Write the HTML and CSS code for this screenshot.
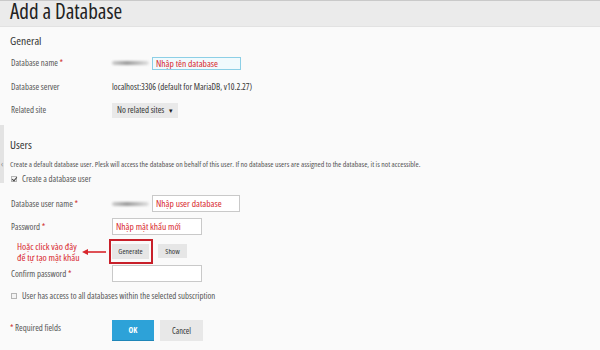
FILE: index.html
```html
<!DOCTYPE html>
<html lang="vi">
  <head>
    <meta charset="UTF-8" />
    <meta name="viewport" content="width=device-width, initial-scale=1.0" />
    <title>Add a Database</title>
    <link rel="stylesheet" href="styles.css">
  </head>
  <body>
    <div class="page-header">
      <h1>Add a Database</h1>
    </div>
    <div class="side-tab">‹</div>
    <div class="content">
      <h2 class="section-title">General</h2>
      <div class="form-row">
        <label>Database name <span class="req">*</span></label>
        <div class="field">
          <span class="blurred"></span>
          <input type="text" class="text-input note-input highlighted" value="Nhập tên database" />
        </div>
      </div>
      <div class="form-row">
        <label>Database server</label>
        <div class="field value">localhost:3306 (default for MariaDB, v10.2.27)</div>
      </div>
      <div class="form-row">
        <label>Related site</label>
        <div class="field">
          <span class="select">No related sites <span class="caret">▾</span></span>
        </div>
      </div>

      <h2 class="section-title users-title">Users</h2>
      <p class="hint">Create a default database user. Plesk will access the database on behalf of this user. If no database users are assigned to the database, it is not accessible.</p>
      <div class="check-row">
        <span class="checkbox checked"></span>
        Create a database user
      </div>
      <div class="user-fields">
        <div class="form-row">
          <label>Database user name <span class="req">*</span></label>
          <div class="field">
            <span class="blurred"></span>
            <input type="text" class="text-input note-input" value="Nhập user database" />
          </div>
        </div>
        <div class="form-row">
          <label>Password <span class="req">*</span></label>
          <div class="field">
            <input type="text" class="text-input note-input pass-input" value="Nhập mật khẩu mới" />
          </div>
        </div>
        <div class="form-row">
          <div class="annotation">
            <span class="annotation-text">Hoặc click vào đây<br />để tự tạo mật khẩu</span>
            <svg class="arrow" width="24" height="8" viewBox="0 0 24 8">
              <line x1="4" y1="4" x2="24" y2="4" stroke="#d8262c" stroke-width="1.6" />
              <polygon points="0,4 6,1 6,7" fill="#d8262c" />
            </svg>
          </div>
          <div class="field">
            <span class="mark-box"><button class="btn btn-generate">Generate</button></span>
            <button class="btn btn-show">Show</button>
          </div>
        </div>
        <div class="form-row">
          <label>Confirm password <span class="req">*</span></label>
          <div class="field">
            <input type="text" class="text-input pass-input" value="" />
          </div>
        </div>
      </div>
      <div class="check-row access-row">
        <span class="checkbox"></span>
        User has access to all databases within the selected subscription
      </div>

      <div class="form-footer">
        <div class="required-note"><span class="req">*</span> Required fields</div>
        <div class="actions">
          <button class="btn-ok">OK</button>
          <button class="btn-cancel">Cancel</button>
        </div>
      </div>
    </div>
  </body>
</html>
```

FILE: styles.css
```css
body {
  margin: 0;
  background: #fafafa;
  font-family: "Open Sans", sans-serif;
  font-stretch: 78%;
  font-size: 8.8px;
  color: #555;
}

input,
button {
  font-family: inherit;
  font-stretch: inherit;
}

.page-header {
  box-sizing: border-box;
  height: 27px;
  padding-left: 10px;
  background: #ebebeb;
  border-top: 1px solid #c9c9c9;
  border-bottom: 1px solid #e2e2e2;
}

.page-header h1 {
  margin: 0;
  font-size: 21px;
  font-weight: normal;
  line-height: 20px;
  color: #222;
  white-space: nowrap;
}

.side-tab {
  position: absolute;
  left: 0;
  top: 125px;
  width: 4px;
  height: 58px;
  background: #e3e3e3;
  color: #888;
  font-size: 8px;
  line-height: 78px;
  text-indent: 1px;
}

.content {
  padding: 0 10px;
}

.section-title {
  margin: 6px 0 2.5px;
  font-size: 11.5px;
  font-stretch: 75%;
  font-weight: normal;
  line-height: 16px;
  color: #333;
}

.users-title {
  margin-top: 14.5px;
  margin-bottom: 0;
}

.form-row {
  display: grid;
  grid-template-columns: 102px 1fr;
  align-items: center;
  height: 23.5px;
  white-space: nowrap;
}

.user-fields {
  margin-top: 7.5px;
}

.user-fields .form-row {
  height: 23.3px;
}

.form-row label {
  padding-left: 1px;
}

.req {
  color: #d0302f;
}

.field {
  display: flex;
  align-items: center;
}

.value {
  color: #333;
}

.blurred {
  width: 37px;
  height: 4px;
  margin-right: 3px;
  border-radius: 2px;
  background: linear-gradient(90deg, #cfcfcf, #9c9c9c 40%, #bdbdbd 70%, #e2e2e2);
  filter: blur(1px);
}

.text-input {
  box-sizing: border-box;
  width: 88px;
  height: 17px;
  padding: 0 3px;
  border: 1px solid #c9c9c9;
  background: #fff;
  font-size: 9.5px;
  color: #333;
  outline: none;
}

.note-input {
  color: #d8262c;
}

.highlighted {
  width: 89px;
  height: 13px;
  border-color: #8ccfe6;
  background: #f1fafd;
}

.pass-input {
  width: 90px;
}

.select {
  box-sizing: border-box;
  display: inline-flex;
  align-items: center;
  width: 66px;
  height: 15px;
  padding: 0 5px;
  background: #e9e9e9;
  color: #333;
  white-space: nowrap;
}

.caret {
  margin-left: auto;
  font-size: 7px;
  color: #222;
}

.hint {
  margin: 6px 0 0;
  font-size: 7.8px;
  line-height: 11px;
  color: #555;
  white-space: nowrap;
}

.check-row {
  display: flex;
  align-items: center;
  margin-top: 3px;
  height: 12px;
  white-space: nowrap;
}

.access-row {
  margin-top: 5px;
}

.checkbox {
  box-sizing: border-box;
  position: relative;
  width: 6px;
  height: 6px;
  margin: 0 5px 0 1px;
  border: 1px solid #b5b5b5;
  background: #f4f4f4;
}

.checkbox.checked::after {
  content: "";
  position: absolute;
  left: 1px;
  top: -1px;
  width: 2px;
  height: 4px;
  border: solid #444;
  border-width: 0 1px 1px 0;
  transform: rotate(40deg);
}

.annotation {
  display: flex;
  align-items: center;
  padding: 2px 6px 0 7px;
}

.annotation-text {
  font-size: 9.6px;
  line-height: 11.5px;
  color: #d8262c;
}

.arrow {
  margin-left: auto;
}

.mark-box {
  display: inline-flex;
  margin-left: -3px;
  padding: 3px 2px 3px 1px;
  border: 2px solid #c8202a;
}

.btn {
  height: 15px;
  padding: 0;
  border: none;
  background: #e6e6e6;
  font-size: 7.6px;
  color: #333;
}

.btn-generate {
  width: 37px;
}

.btn-show {
  width: 29px;
  height: 14px;
  margin-left: 5px;
}

.form-footer {
  display: grid;
  grid-template-columns: 102px 1fr;
  align-items: start;
  margin-top: 17.5px;
}

.required-note {
  padding-top: 2px;
}

.actions {
  display: flex;
  gap: 6px;
}

.btn-ok {
  width: 42px;
  height: 21px;
  border: none;
  border-bottom: 1px solid #1f86b8;
  background: #2da2d8;
  font-size: 8px;
  font-weight: bold;
  color: #fff;
}

.btn-cancel {
  width: 43px;
  height: 21px;
  border: none;
  background: #e8e8e8;
  box-shadow: 0 1px 0 #c9c9c9;
  font-size: 8.4px;
  color: #333;
}
```
